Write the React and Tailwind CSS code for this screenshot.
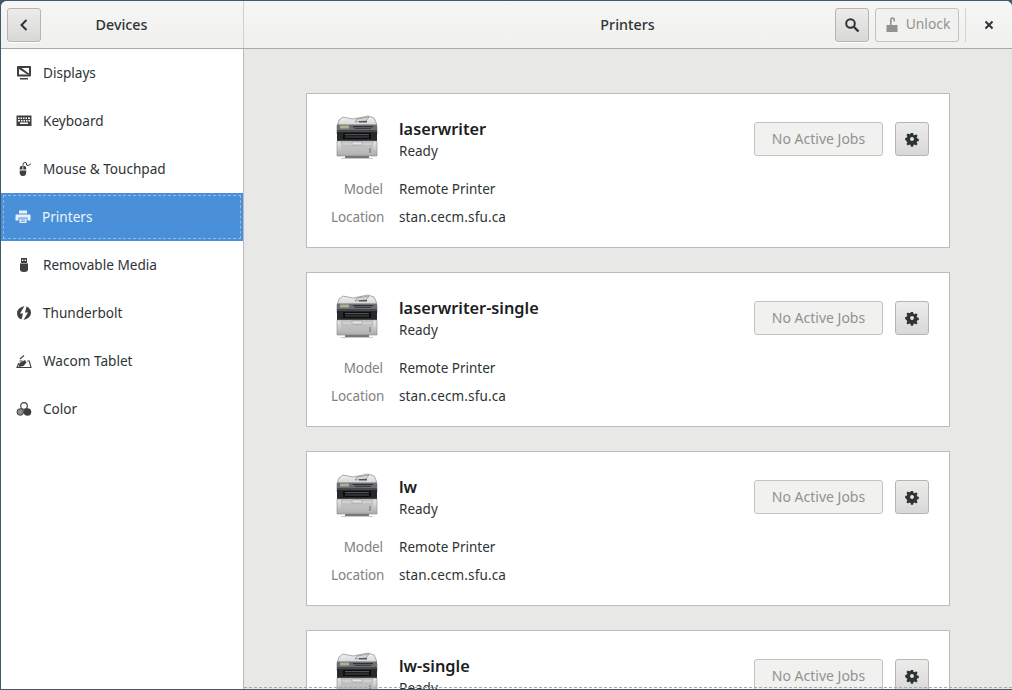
import React from "react";

const ft = { fontFamily: '"Noto Sans", sans-serif' };

function Ic({ children, className = "" }) {
  return (
    <svg viewBox="0 0 16 16" width="16" height="16" className={className}>
      {children}
    </svg>
  );
}

const icons = {
  Displays: (
    <>
      <path fill="#3d3f40" fillRule="evenodd" d="M2 1h12q1 0 1 1v8.500q0 1-1 1H2q-1 0-1-1V2q0-1 1-1zM3 3v6.500h10V3z" />
      <path fill="#3d3f40" d="M3 3h2.500L13 8.500v1h-1.500L3 4zM4 13h8v1.500H4z" />
    </>
  ),
  Keyboard: (
    <path fill="#3d3f40" fillRule="evenodd" d="M0.500 2.500h15v10.500H0.500zM2 4.500v1.500h1.500V4.500zM4.500 4.500v1.500H6V4.500zM7 4.500v1.500h1.500V4.500zM9.500 4.500v1.500H11V4.500zM12 4.500v1.500h2V4.500zM2 7V8.500h2V7zM5 7V8.500h1.500V7zM7.500 7V8.500H9V7zM10 7V8.500h1.500V7zM12.500 7V8.500H14V7zM4 9.500v1.500h8V9.500z" />
  ),
  "Mouse & Touchpad": (
    <>
      <path fill="#3d3f40" d="M5 5h1.500V8.500H3.700V7.500Q3.700 5.200 5 5zM7.300 5h1.500Q10.200 5.200 10.200 7.500v1H7.300zM3.700 9.500h6.500v2Q10.200 15 7 15t-3.300-3.500z" />
      <path fill="none" stroke="#3d3f40" strokeWidth="1" d="M7 5V3.500q0-2 2-2t1.500 1.500 1.500 1.500 2.500-2" />
    </>
  ),
  Printers: (
    <path fill="#e8f1fa" fillRule="evenodd" d="M4 1.500h8v3H4zM1.500 5.500h13q1 0 1 1v5h-3v-3h-9v3h-3v-5q0-1 1-1zM4.500 9.500h7v4.500h-7zM5.800 10.500v.8h4.400v-.8zM5.800 12v.8h4.400V12z" />
  ),
  "Removable Media": (
    <path fill="#3d3f40" fillRule="evenodd" d="M5 1h6v5H5zM6 2.500v1.500h1.300V2.500zM8.700 2.500v1.500H10V2.500zM4 6.500h8v6q0 2.500-4 2.500t-4-2.500z" />
  ),
  Thunderbolt: (
    <>
      <path fill="#3d3f40" d="M8.500 1L4 8.500H7L5.500 14.500Q1 13 1 8T8.500 1z" />
      <path fill="#3d3f40" d="M7.500 15L12 7.500H9L10.500 1.500Q15 3 15 8T7.500 15z" />
    </>
  ),
  "Wacom Tablet": (
    <>
      <path fill="none" stroke="#3d3f40" strokeWidth="1.100" d="M3.500 8h3M2.800 10l-1.800 4.500h14l-1.800-6.500h-2" />
      <path fill="#3d3f40" d="M2.500 14l1-4 5.500-3 1.500 2.500-3 3.500z" />
      <path fill="none" stroke="#3d3f40" strokeWidth="1.100" d="M4 6L8 2.500" />
    </>
  ),
  Color: (
    <>
      <circle cx="8" cy="5" r="3.300" fill="none" stroke="#3d3f40" strokeWidth="1.200" />
      <circle cx="4.300" cy="11" r="3.300" fill="#8b8d8e" stroke="#3d3f40" strokeWidth="1" />
      <circle cx="11.500" cy="11" r="3.800" fill="#3d3f40" />
    </>
  ),
};

const items = ["Displays", "Keyboard", "Mouse & Touchpad", "Printers", "Removable Media", "Thunderbolt", "Wacom Tablet", "Color"];

function PrinterPic() {
  return (
    <svg viewBox="0 0 48 48" width="48" height="48" className="mt-[20px] shrink-0">
      <defs>
        <linearGradient id="pbody" x1="0" y1="0" x2="0" y2="1">
          <stop offset="0" stopColor="#e8e8e8" />
          <stop offset="1" stopColor="#a9a9a9" />
        </linearGradient>
        <linearGradient id="ptop" x1="0" y1="0" x2="0" y2="1">
          <stop offset="0" stopColor="#f2f2f2" />
          <stop offset="1" stopColor="#bdbdbd" />
        </linearGradient>
      </defs>
      <path d="M6 6 L10 3 L20 5 L35 2 L41 4 L43 8 L44 14 V20 H4 V12z" fill="url(#ptop)" stroke="#8a8a8a" strokeWidth=".7" />
      <path d="M24 5 L36 3 L33 7 L22 8z" fill="#d8d8d8" stroke="#777" strokeWidth=".6" />
      <path d="M26 7h8v1.500h-8z" fill="#555" />
      <path d="M4 10.500H44V16H4z" fill="#6b6e72" />
      <path d="M7 11.500H16V14.500H7z" fill="#a8b392" />
      <path d="M20 12h20v1.200H20zM22 14h16v.8H22z" fill="#2f3134" />
      <path d="M4 16H44V27H4z" fill="#27282a" />
      <path d="M4 16H44V18H4z" fill="#47494c" />
      <path d="M10 19H38V25H10z" fill="#0d0d0e" />
      <path d="M12 20h24v1.200H12zM12 22.500h24v1H12z" fill="#505254" />
      <path d="M4 27H44V42H4z" fill="url(#pbody)" stroke="#8a8a8a" strokeWidth=".6" />
      <path d="M8 28H40L39 32H9z" fill="#cfcfcf" stroke="#9a9a9a" strokeWidth=".5" />
      <path d="M19 28H29V31H19z" fill="#e4e4e4" stroke="#8f8f8f" strokeWidth=".5" />
      <path d="M8 32H40V40H8z" fill="#b9b9b9" opacity=".6" />
      <path d="M37 34v5" stroke="#555" strokeWidth=".8" />
      <path d="M12 42H36V44H12z" fill="#777" />
      <path d="M8 44.500H40" stroke="#c8c8c8" strokeWidth="1" />
    </svg>
  );
}

function Gear() {
  return (
    <svg viewBox="0 0 16 16" width="16" height="16">
      <path fill="#2e3436" fillRule="evenodd" d="M6.700 1h2.600l.4 2 1.400.6 1.700-1.100 1.800 1.800-1.100 1.700.6 1.400 1.900.4v2.600l-1.900.4-.6 1.400 1.100 1.700-1.800 1.800-1.700-1.100-1.400.6-.4 1.900H6.700l-.4-1.900-1.400-.6-1.700 1.100-1.800-1.800 1.100-1.700-.6-1.400L0 9.300V6.700l1.900-.4.600-1.400-1.100-1.700 1.800-1.800 1.700 1.100 1.400-.6zM8 5.700a2.300 2.300 0 1 0 .01 0z" transform="translate(1.200 1.200) scale(.85)" />
    </svg>
  );
}

const btn = "flex items-center justify-center rounded-[3px] border border-[#b4b6b4] bg-gradient-to-b from-[#edecea] to-[#d9d8d6] shadow-[0_1px_0_#fff]";

function Card({ name }) {
  return (
    <div className="h-[155px] w-[644px] shrink-0 border border-[#bcbdbb] bg-white pl-[26px] pr-[20px]">
      <div className="flex h-[85px] items-start">
        <PrinterPic />
        <div className="ml-[18px] pt-[23px]">
          <div className="text-[16.300px] leading-[24px] font-semibold text-[#1b1d1e]">{name}</div>
          <div className="text-[13.500px] leading-[20px] text-[#2e3436]">Ready</div>
        </div>
        <div className="ml-auto flex items-center gap-[12px] pt-[28px]">
          <div className="flex h-[34px] w-[129px] items-center justify-center rounded-[3px] border border-[#c3c4c2] bg-[#f1f1f0] pb-[2px] text-[14px] text-[#90938f]">
            No Active Jobs
          </div>
          <div className={`${btn} h-[34px] w-[34px]`}>
            <Gear />
          </div>
        </div>
      </div>
      <div className="-ml-[2px] grid grid-cols-[52px_1fr] gap-x-[16px] gap-y-[8px] text-[13.500px] leading-[20px]">
        <div className="text-right tracking-[-0.1px] text-[#7f8380]">Model</div>
        <div className="text-[#2e3436]">Remote Printer</div>
        <div className="text-right tracking-[-0.1px] text-[#7f8380]">Location</div>
        <div className="tracking-[0.14px] text-[#2e3436]">stan.cecm.sfu.ca</div>
      </div>
    </div>
  );
}

export default function App() {
  return (
    <div style={ft} className="h-[690px] w-[1012px] overflow-hidden bg-[#3f5a68]">
      <div className="ml-[1px] mt-[1px] flex h-[688px] w-[1011px] flex-col overflow-hidden rounded-t-[6px] bg-white">
        <header className="flex h-[48px] shrink-0 border-b border-[#a9aaa7] bg-gradient-to-b from-[#f6f6f5] to-[#f0f0ee]">
          <div className="flex w-[243px] shrink-0 items-center border-r border-[#d0d1ce] pl-[6px]">
            <div className={`${btn} h-[34px] w-[34px]`}>
              <svg viewBox="0 0 16 16" width="16" height="16">
                <path fill="none" stroke="#2e3436" strokeWidth="2" d="M10.500 3L5.500 8l5 5" />
              </svg>
            </div>
            <div className="ml-[-1px] w-[163px] text-center text-[14.300px] font-medium text-[#2e3436]">Devices</div>
          </div>
          <div className="relative flex min-w-0 flex-1 items-center">
            <div className="w-[767px] text-center text-[14.300px] font-medium text-[#2e3436]">Printers</div>
            <div className="absolute right-[0px] top-[7px] flex items-center">
              <div className={`${btn} h-[34px] w-[34px]`}>
                <svg viewBox="0 0 16 16" width="16" height="16">
                  <circle cx="6.500" cy="6.500" r="4.300" fill="none" stroke="#2e3436" strokeWidth="2" />
                  <path d="M10 10l4.500 4.500" stroke="#2e3436" strokeWidth="2.400" />
                </svg>
              </div>
              <div className="ml-[6px] flex h-[34px] w-[84px] items-center justify-center gap-[6px] rounded-[3px] border border-[#c3c4c2] bg-[#f1f1f0] pb-[2px] text-[13.800px] text-[#90938f]">
                <svg viewBox="0 0 16 16" width="16" height="16" className="mt-[2px]">
                  <path fill="#90938f" d="M2.500 8h11v7h-11z" />
                  <path fill="none" stroke="#90938f" strokeWidth="1.600" d="M6.800 8V2.800Q6.800 1 8.500 1t1.700 1.800V4.500" />
                </svg>
                Unlock
              </div>
              <div className="ml-[6px] h-[34px] w-px bg-[#d4d5d2]" />
              <div className="flex h-[34px] w-[46px] items-center justify-center">
                <svg viewBox="0 0 16 16" width="16" height="16">
                  <path d="M4.500 4.500l7 7M11.500 4.500l-7 7" stroke="#2e3436" strokeWidth="2" />
                </svg>
              </div>
            </div>
          </div>
        </header>
        <div className="flex min-h-0 flex-1">
          <nav className="w-[243px] shrink-0 border-r border-[#b9bab7] bg-white">
            {items.map((it) => {
              const active = it === "Printers";
              return active ? (
                <div key={it} className="flex h-[48px] items-center bg-[#4a90d9] p-[2px] text-[13.600px] text-white">
                  <div className="flex h-full w-full items-center border border-dashed border-[#8fbbe8] pl-[11px]">
                    <Ic className="mr-[11px]">{icons[it]}</Ic>
                    <span className="text-[#eef5fc]">{it}</span>
                  </div>
                </div>
              ) : (
                <div key={it} className="flex h-[48px] items-center pl-[15px] text-[13.600px] text-[#2e3436]">
                  <Ic className="mr-[11px]">{icons[it]}</Ic>
                  {it}
                </div>
              );
            })}
          </nav>
          <main className="relative flex min-w-0 flex-1 flex-col gap-[24px] overflow-hidden bg-[#e8e8e7] pl-[62px] pt-[44px]">
            <Card name="laserwriter" />
            <Card name="laserwriter-single" />
            <Card name="lw" />
            <Card name="lw-single" />
            <div className="absolute bottom-[1px] left-0 right-0 border-t border-dashed border-[#a9aaa7]" />
          </main>
        </div>
      </div>
    </div>
  );
}
